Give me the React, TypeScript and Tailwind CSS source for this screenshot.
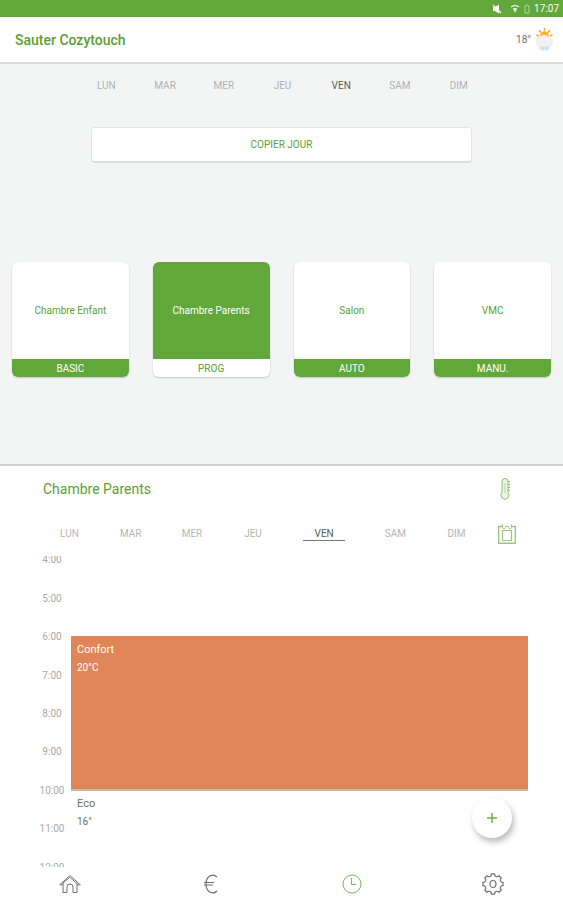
import React, { useState } from 'react';

const DAYS = ['LUN', 'MAR', 'MER', 'JEU', 'VEN', 'SAM', 'DIM'];

const HOURS = ['4:00', '5:00', '6:00', '7:00', '8:00', '9:00', '10:00', '11:00', '12:00'];

const ROOMS = [
    { name: 'Chambre Enfant', mode: 'BASIC' },
    { name: 'Chambre Parents', mode: 'PROG' },
    { name: 'Salon', mode: 'AUTO' },
    { name: 'VMC', mode: 'MANU.' },
];

const StatusIcons = () => (
    <>
        <svg width="10" height="10" viewBox="0 0 10 10" fill="currentColor" aria-hidden="true">
            <path d="M1 3h2l4-2.500v9L3 7H1z" />
            <path d="M1 1l8 8" stroke="currentColor" strokeWidth="1.2" fill="none" />
        </svg>
        <svg width="10" height="10" viewBox="0 0 10 10" fill="none" stroke="currentColor" opacity="0.8" className="ml-1" aria-hidden="true">
            <path d="M1 3q4-3 8 0" strokeWidth="1.4" />
            <path d="M2.8 4.6q2.2-1.6 4.4 0L5 9z" fill="currentColor" stroke="none" />
        </svg>
        <svg width="6" height="10" viewBox="0 0 6 10" fill="none" stroke="currentColor" opacity="0.5" aria-hidden="true">
            <path d="M1 2h1V1h2v1h1v7H1z" />
        </svg>
    </>
);

const WeatherIcon = () => (
    <svg width="20" height="25" viewBox="0 0 20 25" aria-hidden="true">
        <path d="M4 3l2 2.5M9.5 1v2.5M15 3l-2 2.5M1.500 8l2.500 1M17.500 8L15 9" stroke="#f5a623" strokeWidth="1.400" />
        <circle cx="9.500" cy="8.500" r="4.300" fill="#f9b233" />
        <path d="M4 19h10l-1 4H5.500z" fill="#d5e9f3" />
        <path
            d="M5 19.500a4.500 4.500 0 0 1-.5-8.800 5.500 5.500 0 0 1 9.300-.2 4.700 4.700 0 0 1 .7 9z"
            fill="#f1f1f3"
            stroke="#e4e5e8"
            strokeWidth="0.500"
        />
        <path d="M5.500 20l-.5 2.500M8.500 20l-.5 4M11.500 20l-.5 4M14 20l-.5 2.500" stroke="#b9d9ea" />
    </svg>
);

const ThermometerIcon = () => (
    <svg width="14" height="24" viewBox="0 0 14 24" fill="none" stroke="currentColor" aria-hidden="true">
        <path d="M4 15.500V4.500a3 3 0 0 1 6 0v11a4 4 0 1 1-6 0z" fill="#edf5e8" />
        <path d="M7 6v10" strokeWidth="0.600" />
        <path d="M10 4.500h2M10 7.500h2M10 10.500h2M10 13.500h2" />
    </svg>
);

const CalendarIcon = () => (
    <svg width="18" height="20" viewBox="0 0 18 20" fill="none" stroke="currentColor" aria-hidden="true">
        <path d="M4 2.500H.700v16.800h16.600V2.500H14" strokeWidth="1.400" />
        <path d="M4.500 6.500h9v10h-9z" strokeWidth="1.200" />
        <path d="M4.500.5v3a1 1 0 0 0 1 1h1a1 1 0 0 0 1-1v-1h3v1a1 1 0 0 0 1 1h1a1 1 0 0 0 1-1v-3" />
    </svg>
);

const HomeIcon = () => (
    <svg width="22" height="22" viewBox="0 0 22 22" fill="none" stroke="currentColor" strokeLinejoin="round" strokeLinecap="round" aria-hidden="true">
        <path d="M1 11.500L11 2.500l10 9" />
        <path d="M1 11.500l.8.8 2.200-1.300M21 11.500l-.8.8-2.200-1.300" />
        <path d="M4 10.500v9h4V14a3 3 0 0 1 6 0v5.500h4v-9L11 4.500z" />
    </svg>
);

const EuroIcon = () => (
    <svg width="22" height="22" viewBox="0 0 22 22" fill="none" stroke="currentColor" strokeWidth="1.200" aria-hidden="true">
        <path d="M17 4A6.800 8.700 0 0 0 6 11 6.800 8.700 0 0 0 17 18" />
        <path d="M4 9.500h10M4 12h9" />
    </svg>
);

const ClockIcon = () => (
    <svg width="22" height="22" viewBox="0 0 22 22" fill="none" stroke="currentColor" aria-hidden="true">
        <circle cx="11" cy="11" r="9" />
        <path d="M10.500 5v6.500H15" />
    </svg>
);

const polar = (radius: number, degrees: number) => {
    const angle = (degrees * Math.PI) / 180;
    return `${(11 + radius * Math.sin(angle)).toFixed(2)} ${(11 - radius * Math.cos(angle)).toFixed(2)}`;
};

// Eight narrow teeth joined by rounded notches.
const GEAR_PATH =
    [0, 45, 90, 135, 180, 225, 270, 315]
        .map((a, i) => `${i ? 'L' : 'M'}${polar(10.2, a - 9)}L${polar(10.2, a + 9)}L${polar(8.6, a + 13)}A2.6 2.6 0 0 0 ${polar(8.6, a + 32)}`)
        .join('') + 'Z';

const GearIcon = () => (
    <svg width="22" height="22" viewBox="0 0 22 22" fill="none" stroke="currentColor" strokeWidth="1.200" strokeLinejoin="round" aria-hidden="true">
        <path d={GEAR_PATH} />
        <ellipse cx="11" cy="11" rx="3" ry="3.500" />
    </svg>
);

const NAV = [
    { label: 'Accueil', icon: <HomeIcon />, active: false },
    { label: 'Consommation', icon: <EuroIcon />, active: false },
    { label: 'Programmation', icon: <ClockIcon />, active: true },
    { label: 'Réglages', icon: <GearIcon />, active: false },
];

export default function App() {
    const [copyDay, setCopyDay] = useState('VEN');
    const [planDay, setPlanDay] = useState('VEN');
    const [room, setRoom] = useState('Chambre Parents');

    return (
        <div className="min-h-screen flex flex-col bg-white font-[Roboto,sans-serif] text-[10px] leading-3 text-[#6f6f6f]">
            <div className="h-[17px] flex items-center justify-end gap-1 pr-1 pt-px bg-[#61a73a] text-white">
                <StatusIcons />
                <span>17:07</span>
            </div>

            <header className="h-[47px] flex items-center justify-between pl-[15px] pr-2 border-b-2 border-[#d9dbdb]">
                <h1 className="text-sm font-medium text-[#5ba033]">Sauter Cozytouch</h1>
                <div className="flex items-center gap-1">
                    <span>18°</span>
                    <WeatherIcon />
                </div>
            </header>

            <section className="pt-4 pb-[87px] bg-[#f3f5f5] border-b-2 border-[#cfd1d1]">
                <div className="grid grid-cols-7 pl-[77px] pr-[75px]">
                    {DAYS.map(day => (
                        <button
                            key={day}
                            onClick={() => setCopyDay(day)}
                            className={day === copyDay ? 'text-[#5c5c5c]' : 'text-[#b0b1b1]'}
                        >
                            {day}
                        </button>
                    ))}
                </div>

                <div className="px-[91px] mt-[35px]">
                    <button className="block w-full h-9 bg-white rounded-sm border border-[#e3e5e5] border-b-2 border-b-[#dadcdc] text-[#5ba033]">
                        COPIER JOUR
                    </button>
                </div>

                <div className="grid grid-cols-4 gap-6 px-3 mt-[99px]">
                    {ROOMS.map(({ name, mode }) => {
                        const selected = name === room;
                        return (
                            <button
                                key={name}
                                onClick={() => setRoom(name)}
                                className="flex flex-col rounded-md overflow-hidden bg-white shadow-[0_1px_2px_rgba(0,0,0,0.2)]"
                            >
                                <span className={`w-full h-[97px] pt-px flex items-center justify-center ${selected ? 'bg-[#61a73a] text-white' : 'text-[#5ba033]'}`}>
                                    {name}
                                </span>
                                <span className={`w-full h-[18px] pt-px flex items-center justify-center ${selected ? 'text-[#5ba033]' : 'bg-[#61a73a] text-white'}`}>
                                    {mode}
                                </span>
                            </button>
                        );
                    })}
                </div>
            </section>

            <main className="grow">
                <div className="flex items-center justify-between h-[46px] pl-[43px] pr-[51px] text-[#5ba033]">
                    <h2 className="text-sm">{room}</h2>
                    <button aria-label="Température" className="text-[#8dbd70]"><ThermometerIcon /></button>
                </div>

                <div className="flex items-center justify-between h-[44px] pl-[39px] pr-[47px]">
                    <div className="grow grid grid-cols-[repeat(4,3fr)_4fr_3fr_3fr] mr-[11px]">
                        {DAYS.map(day => (
                            <button
                                key={day}
                                onClick={() => setPlanDay(day)}
                                className={`mx-5 flex justify-center border-b ${day === planDay ? 'text-[#5c5c5c] border-[#777777]' : 'text-[#b5b5b5] border-transparent'}`}
                            >
                                {day}
                            </button>
                        ))}
                    </div>
                    <button aria-label="Calendrier" className="text-[#9cc584]"><CalendarIcon /></button>
                </div>

                <div className="relative">
                    <div className="flex h-[311px] overflow-hidden pl-[33px] pr-[35px]">
                        <ol className="w-[38px] h-[346px] -mt-[15px] shrink-0 grid grid-rows-9 items-center text-center text-[#a9a9a9]">
                            {HOURS.map(hour => <li key={hour}>{hour}</li>)}
                        </ol>
                        <div className="grow pt-20">
                            <div className="h-[155px] px-1.5 pt-2 bg-[#e08558] border-b-2 border-[#c9b8ae] text-white">
                                <p className="text-[11px]">Confort</p>
                                <p className="mt-1.5">20°C</p>
                            </div>
                            <div className="px-1.5 pt-[7px]">
                                <p className="text-[11px]">Eco</p>
                                <p className="mt-1.5">16°</p>
                            </div>
                        </div>
                    </div>
                    <button
                        aria-label="Ajouter"
                        className="absolute right-[51px] bottom-[29px] size-10 rounded-full bg-white flex items-center justify-center text-[#6fae4b] shadow-[2px_4px_6px_rgba(0,0,0,0.28)]"
                    >
                        <svg width="12" height="12" viewBox="0 0 12 12" stroke="currentColor" strokeWidth="1.500" aria-hidden="true">
                            <path d="M6 1v10M1 6h10" />
                        </svg>
                    </button>
                </div>
            </main>

            <nav className="h-[33px] grid grid-cols-4">
                {NAV.map(({ label, icon, active }) => (
                    <a
                        key={label}
                        href="#"
                        aria-label={label}
                        className={`flex items-center justify-center ${active ? 'text-[#7bb45a]' : 'text-[#6f6f6f]'}`}
                    >
                        {icon}
                    </a>
                ))}
            </nav>
        </div>
    );
}
